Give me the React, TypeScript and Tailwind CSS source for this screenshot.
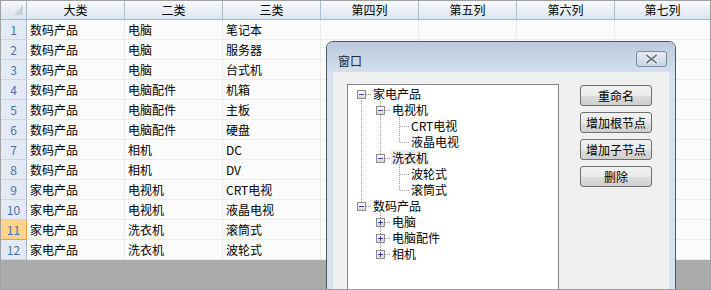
import React from "react";

type Node = { label: string; open?: boolean; selected?: boolean; children?: Node[] };

const tree: Node[] = [
  {
    label: "家电产品",
    open: true,
    children: [
      { label: "电视机", open: true, children: [{ label: "CRT电视" }, { label: "液晶电视" }] },
      { label: "洗衣机", open: true, selected: true, children: [{ label: "波轮式" }, { label: "滚筒式" }] },
    ],
  },
  {
    label: "数码产品",
    open: true,
    children: [
      { label: "电脑", children: [{ label: "台式机" }] },
      { label: "电脑配件", children: [{ label: "机箱" }] },
      { label: "相机", children: [{ label: "DC" }] },
    ],
  },
];

type Row = {
  node: Node;
  depth: number;
  trail: boolean[];
  hasNext: boolean;
  first: boolean;
};

function flatten(nodes: Node[], depth: number, trail: boolean[], out: Row[]) {
  nodes.forEach((n, i) => {
    const hasNext = i < nodes.length - 1;
    out.push({ node: n, depth, trail, hasNext, first: depth === 0 && i === 0 });
    if (n.open && n.children) flatten(n.children, depth + 1, [...trail, hasNext], out);
  });
  return out;
}

const cols = ["大类", "二类", "三类", "第四列", "第五列", "第六列", "第七列"];

const data = [
  ["数码产品", "电脑", "笔记本"],
  ["数码产品", "电脑", "服务器"],
  ["数码产品", "电脑", "台式机"],
  ["数码产品", "电脑配件", "机箱"],
  ["数码产品", "电脑配件", "主板"],
  ["数码产品", "电脑配件", "硬盘"],
  ["数码产品", "相机", "DC"],
  ["数码产品", "相机", "DV"],
  ["家电产品", "电视机", "CRT电视"],
  ["家电产品", "电视机", "液晶电视"],
  ["家电产品", "洗衣机", "滚筒式"],
  ["家电产品", "洗衣机", "波轮式"],
];

const dot = "#9a9a9a";

function Guide({ on }: { on: boolean }) {
  return (
    <svg width="19" height="16" className="shrink-0">
      {on && <line x1="9.5" y1="0" x2="9.5" y2="16" stroke={dot} strokeDasharray="1 1" />}
    </svg>
  );
}

function Connector({ row }: { row: Row }) {
  const kids = !!row.node.children;
  return (
    <svg width="19" height="16" className="shrink-0">
      <line
        x1="9.5"
        y1={row.first ? 9 : 0}
        x2="9.5"
        y2={row.hasNext ? 16 : 9}
        stroke={dot}
        strokeDasharray="1 1"
      />
      <line x1="10" y1="9.5" x2="19" y2="9.5" stroke={dot} strokeDasharray="1 1" />
      {kids && (
        <g>
          <defs>
            <linearGradient id="bx" x1="0" y1="0" x2="0" y2="1">
              <stop offset="0" stopColor="#ffffff" />
              <stop offset="1" stopColor="#d6d6d6" />
            </linearGradient>
          </defs>
          <rect x="5.5" y="5.5" width="8" height="8" fill="url(#bx)" stroke="#8c8c8c" />
          <line x1="7" y1="9.5" x2="12" y2="9.5" stroke="#2d4f98" />
          {!row.node.open && <line x1="9.5" y1="7" x2="9.5" y2="12" stroke="#2d4f98" />}
        </g>
      )}
    </svg>
  );
}

function TreeView() {
  const rows = flatten(tree, 0, [], []);
  return (
    <div className="w-[212px] h-full border border-[#828790] bg-white pl-[4px] overflow-hidden">
      {rows.map((r, i) => (
        <div key={i} className="flex items-center h-[16px]">
          {r.trail.map((t, k) => (
            <Guide key={k} on={t} />
          ))}
          <Connector row={r} />
          <span
            className={
              "ml-[1px] px-[1px] leading-[15px] whitespace-nowrap " +
              (r.node.selected ? "bg-[#ececec]" : "")
            }
          >
            {r.node.label}
          </span>
        </div>
      ))}
    </div>
  );
}

function Btn({ children }: { children: React.ReactNode }) {
  return (
    <button className="w-[72px] h-[21px] rounded-[3px] border border-[#707070] bg-[linear-gradient(#f2f2f2_0%,#ebebeb_50%,#dddddd_51%,#cfcfcf_100%)] text-[12px] leading-[19px] text-black text-center">
      {children}
    </button>
  );
}

function CloseBtn() {
  return (
    <div className="w-[31px] h-[16px] rounded-[3px] border border-[#7b8aa1] bg-[linear-gradient(#e6ecf4,#c9d5e4)] flex items-center justify-center">
      <svg width="13" height="10" viewBox="0 0 13 10">
        <path d="M2 1.5 L11 8.5 M11 1.5 L2 8.5" stroke="#ffffff" strokeWidth="4" strokeLinecap="square" />
        <path d="M2 1.5 L11 8.5 M11 1.5 L2 8.5" stroke="#6f7d92" strokeWidth="2" strokeLinecap="square" />
      </svg>
    </div>
  );
}

function Dialog() {
  return (
    <div className="absolute left-[325px] top-[40px] w-[350px] h-[260px] border border-[#4f5763] rounded-t-[7px] bg-[#d5e1ef] flex flex-col overflow-hidden">
      <div className="h-[30px] shrink-0 flex items-start justify-between pl-[11px] pr-[8px] bg-[linear-gradient(#bac9dd,#d3dfed)]">
        <span className="mt-[12px] text-[12px] leading-[14px] text-[#1f2a3a]">窗口</span>
        <div className="mt-[9px]">
          <CloseBtn />
        </div>
      </div>
      <div className="flex-1 mx-[6px] bg-[#f0f0f0] flex gap-[21px] pl-[14px] pt-[12px] min-h-0">
        <TreeView />
        <div className="flex flex-col gap-[6px] mt-[1px]">
          <Btn>重命名</Btn>
          <Btn>增加根节点</Btn>
          <Btn>增加子节点</Btn>
          <Btn>删除</Btn>
        </div>
      </div>
    </div>
  );
}

function Corner() {
  return (
    <div className="w-[26px] h-full shrink-0 border-r border-[#a3b9d2] bg-[linear-gradient(#f6f8fb,#dbe3ee)] flex items-end justify-end pr-[2px] pb-[3px]">
      <svg width="10" height="11" viewBox="0 0 10 11">
        <polygon points="9,0 9,10 0,10" fill="#c9cfd8" />
      </svg>
    </div>
  );
}

export default function App() {
  return (
    <div className="relative w-[711px] h-[290px] overflow-hidden border border-[#a0a0a0] bg-[#ababab] font-['Noto_Sans_CJK_SC',sans-serif] text-[12px] text-black">
      {/* header */}
      <div className="flex h-[19px] border-b border-[#a3b8d0]">
        <Corner />
        {cols.map((c, i) => (
          <div
            key={c}
            className={
              "h-full bg-[linear-gradient(#f8fafc,#dce5f0)] flex items-center justify-center leading-[18px] " +
              (i < cols.length - 1 ? "w-[98px] shrink-0 border-r border-[#a9bdd5]" : "flex-1")
            }
          >
            {c}
          </div>
        ))}
      </div>
      {/* rows */}
      {data.map((r, ri) => {
        const sel = ri === 10;
        return (
          <div key={ri} className="flex h-[20px] bg-[#fbfbfb]">
            <div
              className={
                "w-[26px] shrink-0 h-full flex items-center justify-center leading-[19px] " +
                (sel
                  ? "bg-[#ffd58d] border-r border-b border-[#f29a3d] text-[#3b6fae]"
                  : "bg-[#e3eaf4] border-r border-b border-r-[#a3b9d2] border-b-[#c8d5e5] text-[#3f74b3]")
              }
            >
              {ri + 1}
            </div>
            {cols.map((_, ci) => (
              <div
                key={ci}
                className={
                  "h-full border-b border-[#ebebeb] pl-[3px] leading-[19px] whitespace-nowrap " +
                  (ci < cols.length - 1 ? "w-[98px] shrink-0 border-r" : "flex-1")
                }
              >
                {r[ci] ?? ""}
              </div>
            ))}
          </div>
        );
      })}
      <Dialog />
    </div>
  );
}
